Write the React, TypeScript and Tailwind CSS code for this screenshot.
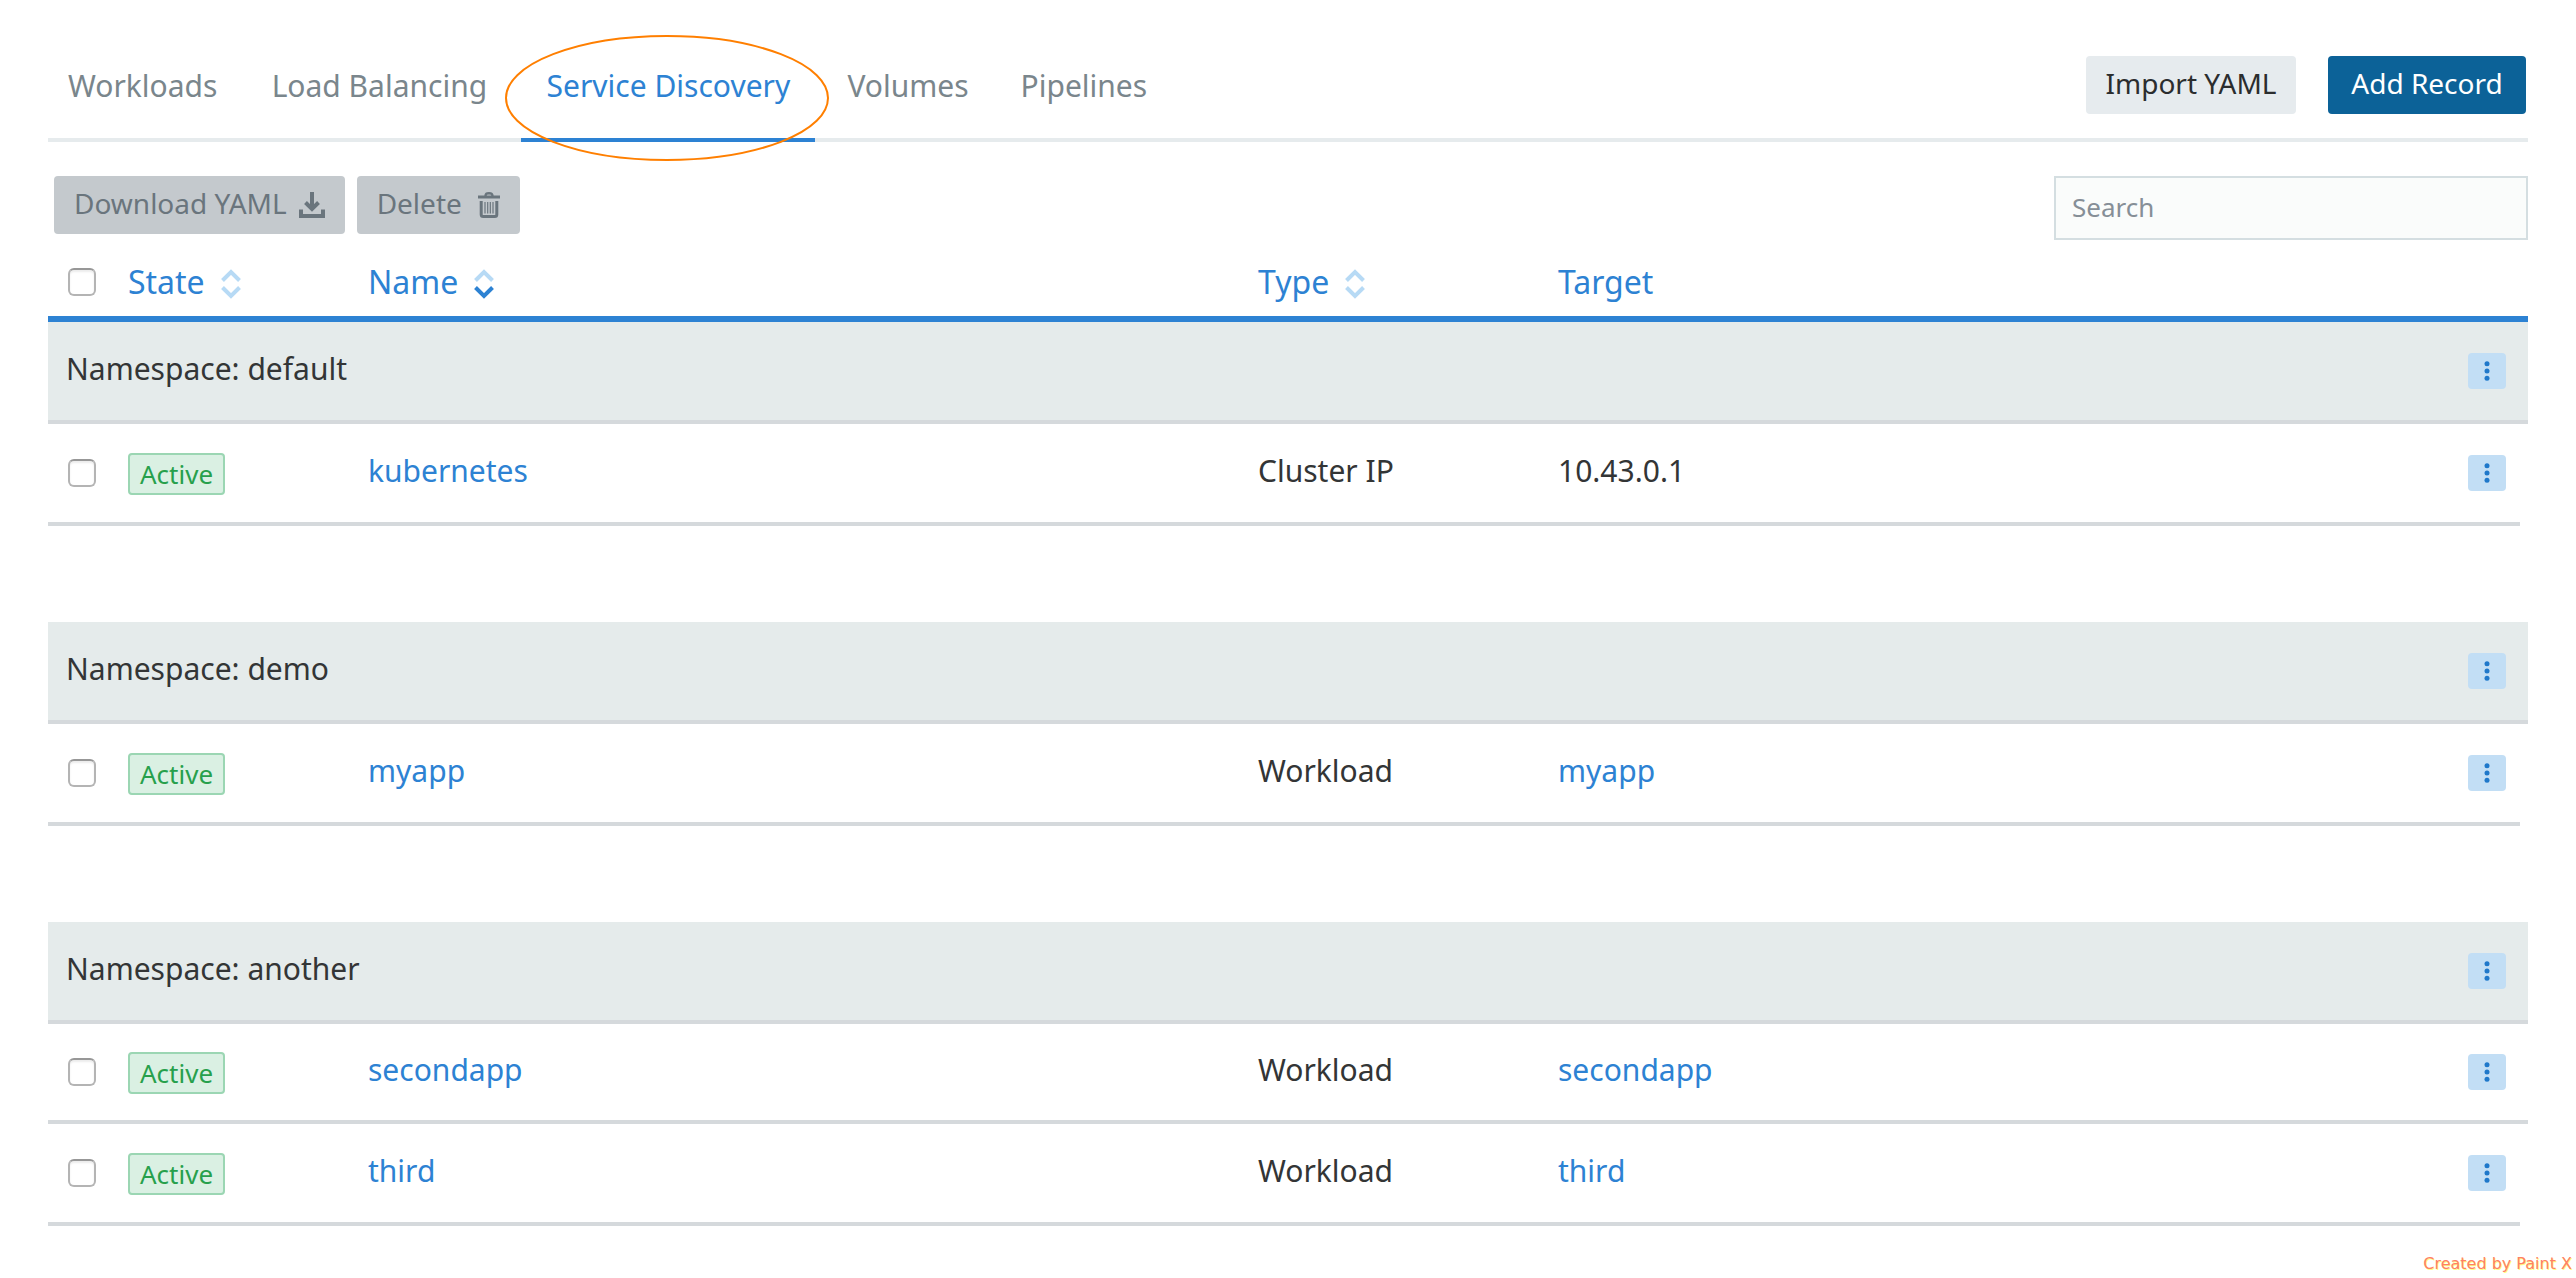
import React, { useState } from "react";

const tabs = [
  { label: "Workloads", width: "" },
  { label: "Load Balancing", width: "min-w-[260px]" },
  { label: "Service Discovery", width: "min-w-[294px]" },
  { label: "Volumes", width: "" },
  { label: "Pipelines", width: "" },
];

type Service = { name: string; type: string; target: string; linked: boolean };

const groups: { namespace: string; services: Service[] }[] = [
  {
    namespace: "default",
    services: [{ name: "kubernetes", type: "Cluster IP", target: "10.43.0.1", linked: false }],
  },
  {
    namespace: "demo",
    services: [{ name: "myapp", type: "Workload", target: "myapp", linked: true }],
  },
  {
    namespace: "another",
    services: [
      { name: "secondapp", type: "Workload", target: "secondapp", linked: true },
      { name: "third", type: "Workload", target: "third", linked: true },
    ],
  },
];

function Checkbox({ label }: { label: string }) {
  return (
    <input
      type="checkbox"
      aria-label={label}
      className="ml-5 block size-7 appearance-none rounded-md border-2 border-[#b4b4b4] border-t-[#979797] bg-white shadow-[inset_0_2px_2px_#ededed] checked:bg-[#2d82d3]"
    />
  );
}

function SortIcon({ down = false }: { down?: boolean }) {
  return (
    <svg className="mt-1" width="20" height="30" viewBox="0 0 20 30" fill="none" strokeWidth="4" aria-hidden="true">
      <path d="M1.5 11.5 10 3l8.5 8.5" stroke="#b7daf5" />
      <path d="M1.5 18.5 10 27l8.5-8.5" stroke={down ? "#2d82d3" : "#b7daf5"} />
    </svg>
  );
}

function SortHeader({ label, down }: { label: string; down?: boolean }) {
  return (
    <button type="button" className="flex items-center gap-4 leading-9">
      {label}
      <SortIcon down={down} />
    </button>
  );
}

function DownloadIcon() {
  return (
    <svg width="26" height="26" viewBox="0 0 26 26" fill="none" stroke="currentColor" strokeWidth="4" aria-hidden="true">
      <path d="M13 0v17" />
      <path d="m6.500 10.500 6.500 6.500 6.500-6.500" />
      <path d="M2 17.500v6.500h22v-6.500" />
    </svg>
  );
}

function TrashIcon() {
  return (
    <svg width="22" height="26" viewBox="0 0 22 26" fill="none" stroke="currentColor" aria-hidden="true">
      <path d="M0 5h22" strokeWidth="3" />
      <path d="M7.5 4.5c0-3 1-3.200 3.500-3.200s3.500.2 3.500 3.200" strokeWidth="2.5" />
      <path d="M3.200 9v13.500q0 2 2 2h11.600q2 0 2-2V9" strokeWidth="3" />
      <path d="M7 10v11.500M9.700 10v11.500M12.300 10v11.500M15 10v11.500" strokeWidth="1.2" />
    </svg>
  );
}

function MenuButton({ label }: { label: string }) {
  return (
    <button
      type="button"
      aria-label={label}
      className="ml-5 flex h-9 w-[38px] items-center justify-center rounded-sm bg-[#c2def5] text-[#1f78ca]"
    >
      <svg width="6" height="20" viewBox="0 0 6 20" fill="currentColor" aria-hidden="true">
        <circle cx="3" cy="2.800" r="2.500" />
        <circle cx="3" cy="10" r="2.500" />
        <circle cx="3" cy="17.200" r="2.500" />
      </svg>
    </button>
  );
}

function ServiceRow({ service, last }: { service: Service; last: boolean }) {
  const line = "border-b-4 border-[#d5d9dc] p-0";
  return (
    <tr className={last ? "h-[102px]" : "h-[100px]"}>
      <td className={line}>
        <Checkbox label={`Select ${service.name}`} />
      </td>
      <td className={line}>
        <span className="inline-flex h-[42px] items-center rounded-sm border-2 border-[#9bd6b3] bg-[#daf0e3] px-2.5 align-middle text-[26px] text-[#27a04c]">
          Active
        </span>
      </td>
      <td className={`${line} pb-1`}>
        <a href="#" className="text-[#2d82d3]">{service.name}</a>
      </td>
      <td className={`${line} pb-1`}>{service.type}</td>
      <td className={`${line} pb-1`}>
        {service.linked ? <a href="#" className="text-[#2d82d3]">{service.target}</a> : service.target}
      </td>
      <td className={line}>
        <MenuButton label={`Actions for ${service.name}`} />
      </td>
      <td className={last ? "p-0" : line} />
    </tr>
  );
}

export default function App() {
  const [active, setActive] = useState("Service Discovery");
  return (
    <div className="relative min-h-screen bg-white px-12 pt-[30px] font-['Noto_Sans',sans-serif] text-[30px] leading-10 text-[#333536]">
      <header className="flex items-end justify-between border-b-4 border-[#e6ebed]">
        <nav className="-mb-1 flex gap-3">
          {tabs.map(({ label, width }) => (
            <div key={label} className={`relative text-center ${width}`}>
              <a
                href="#"
                onClick={() => setActive(label)}
                className={
                  label === active
                    ? "block border-b-4 border-[#2d82d3] px-5 pt-9 pb-8 text-[#2d82d3]"
                    : "block border-b-4 border-transparent px-5 pt-9 pb-8 text-[#7a868c]"
                }
              >
                {label}
              </a>
              {label === "Service Discovery" && (
                <svg
                  className="pointer-events-none absolute top-1 -left-4 h-32 w-[calc(100%+30px)]"
                  viewBox="0 0 324 128"
                  preserveAspectRatio="none"
                  fill="none"
                  aria-hidden="true"
                >
                  <ellipse cx="162" cy="64" rx="161" ry="62" stroke="#ff7f00" strokeWidth="2" />
                </svg>
              )}
            </div>
          ))}
        </nav>
        <div className="mr-0.5 mb-6 flex gap-8 text-[28px]">
          <button type="button" className="h-[58px] min-w-[210px] rounded-sm bg-[#e6ebee] px-4 pb-1 text-[#2b2d2e]">Import YAML</button>
          <button type="button" className="h-[58px] min-w-[198px] rounded-sm bg-[#0c6298] px-4 pb-1 text-white">Add Record</button>
        </div>
      </header>

      <div className="flex items-start justify-between pt-[34px]">
        <div className="ml-1.5 flex gap-3 text-[28px] text-[#6a757d]">
          <button type="button" className="flex h-[58px] items-center gap-3 rounded-sm bg-[#c4c9cd] px-5">
            <span className="pb-1">Download YAML</span>
            <DownloadIcon />
          </button>
          <button type="button" className="flex h-[58px] items-center gap-4 rounded-sm bg-[#c4c9cd] px-5">
            <span className="pb-1">Delete</span>
            <TrashIcon />
          </button>
        </div>
        <input
          type="search"
          aria-label="Search"
          placeholder="Search"
          className="h-16 w-[474px] border-2 border-[#d4dee1] bg-[#fafcfb] px-4 pb-0.5 text-[26px] placeholder:text-[#868f97]"
        />
      </div>

      <table className="w-full table-fixed border-separate border-spacing-0 text-left">
        <colgroup>
          <col className="w-20" />
          <col className="w-60" />
          <col />
          <col className="w-[300px]" />
          <col />
          <col className="w-[72px]" />
          <col className="w-2" />
        </colgroup>
        <thead className="text-[32px] text-[#2d82d3]">
          <tr className="h-[82px] *:border-b-6 *:border-[#2d82d3] *:p-0 *:pt-2 *:font-normal">
            <th><Checkbox label="Select all" /></th>
            <th><SortHeader label="State" /></th>
            <th><SortHeader label="Name" down /></th>
            <th><SortHeader label="Type" /></th>
            <th>Target</th>
            <th />
            <th />
          </tr>
        </thead>
        {groups.map((group, g) => (
          <tbody key={group.namespace}>
            {g > 0 && (
              <tr className="h-24">
                <td colSpan={7} className="p-0" />
              </tr>
            )}
            <tr className="h-[102px] bg-[#e5ebeb] *:border-b-4 *:border-[#d5d9dc] *:p-0">
              <th colSpan={5} scope="rowgroup" className="font-normal">
                <div className="pb-1 pl-[18px]">Namespace: {group.namespace}</div>
              </th>
              <td><MenuButton label={`Actions for namespace ${group.namespace}`} /></td>
              <td />
            </tr>
            {group.services.map((service, i) => (
              <ServiceRow key={service.name} service={service} last={i === group.services.length - 1} />
            ))}
          </tbody>
        ))}
      </table>

      <p className="absolute right-1 bottom-0 font-['DejaVu_Sans',sans-serif] text-base leading-7 text-[#ff7f66] [text-shadow:1px_1px_0_#ffff80]">
        Created by Paint X
      </p>
    </div>
  );
}
